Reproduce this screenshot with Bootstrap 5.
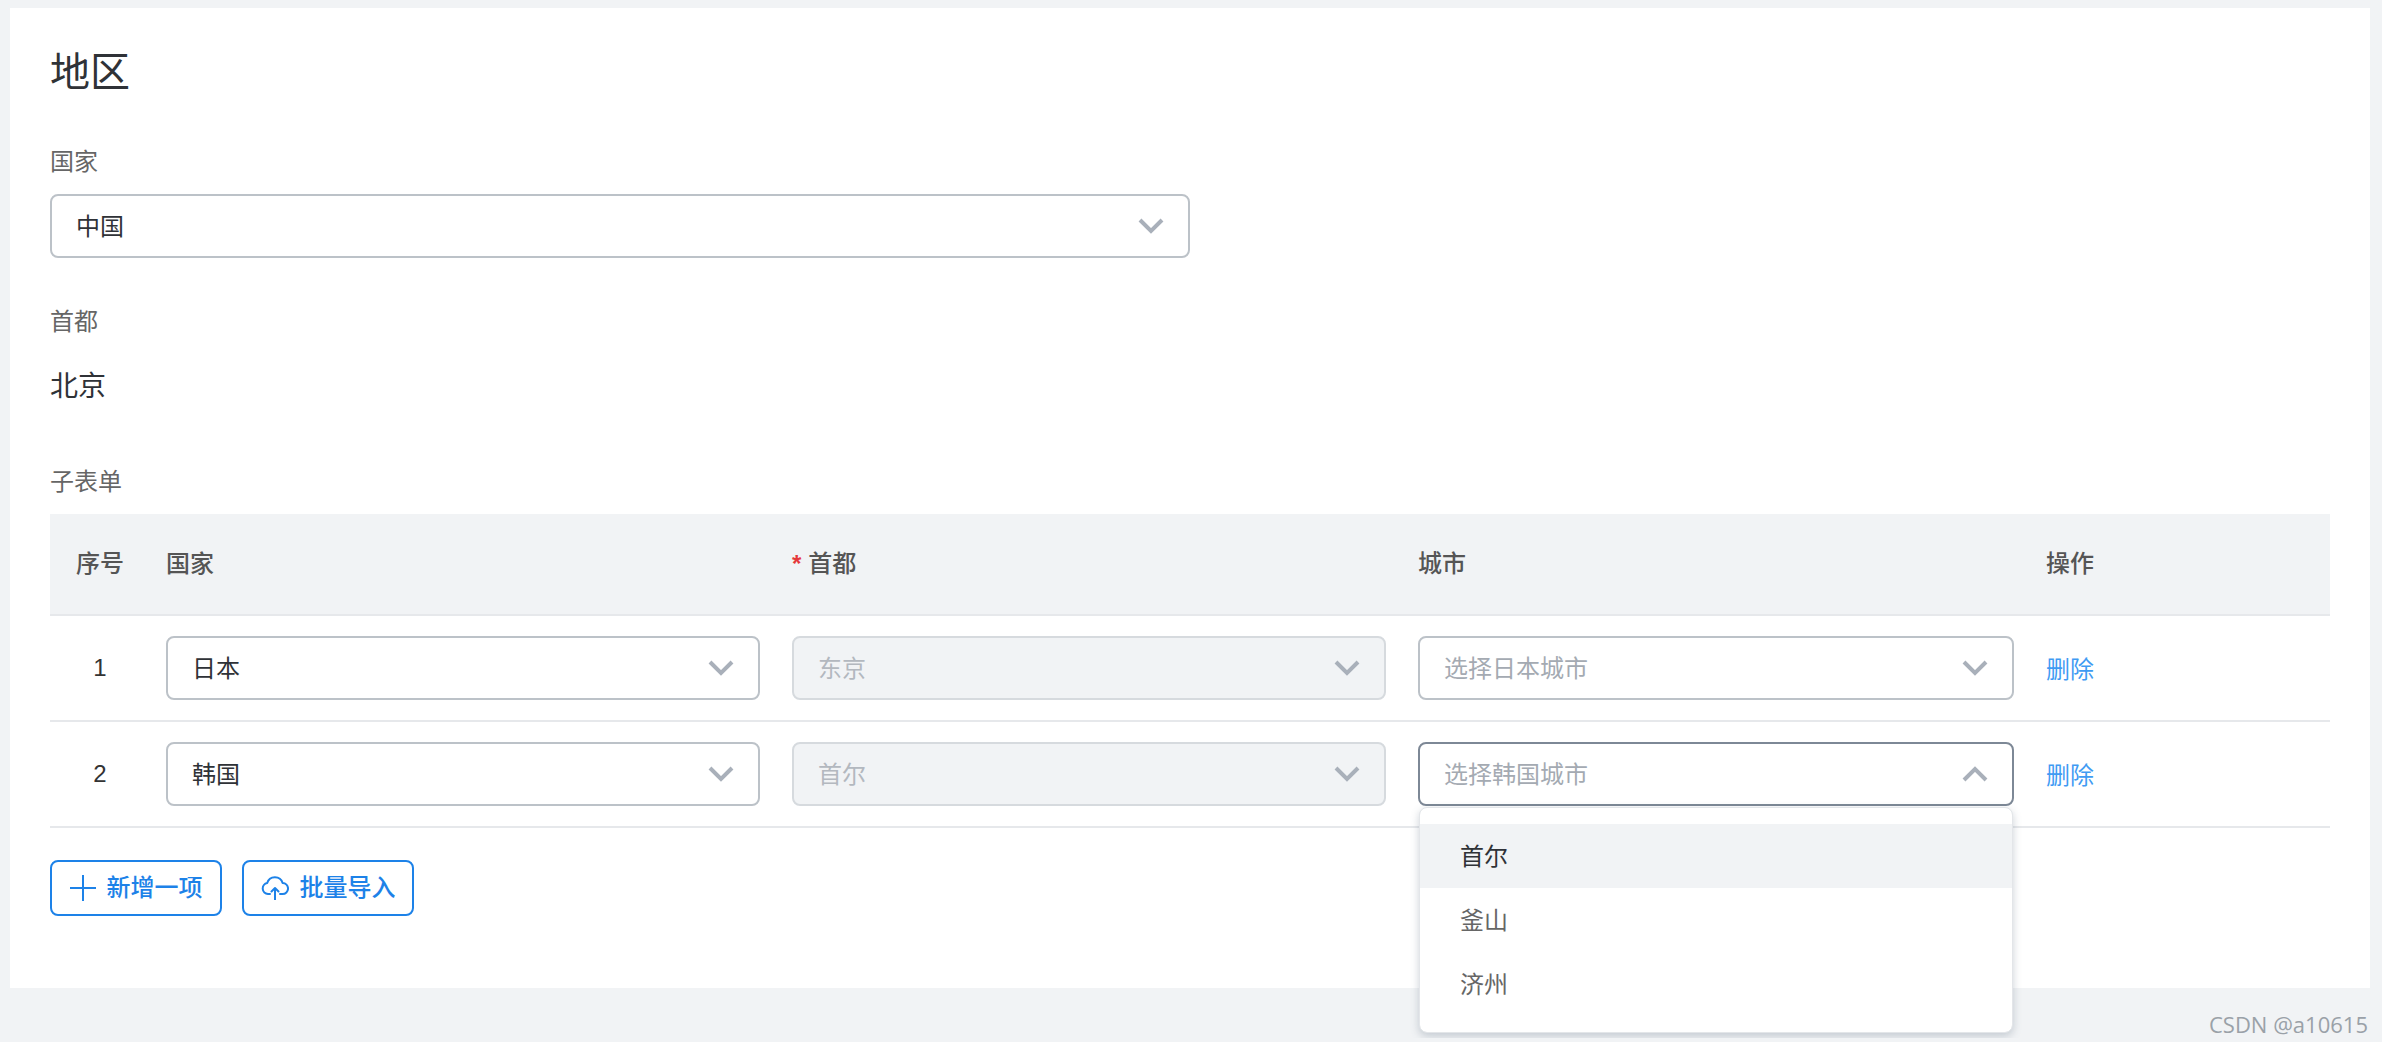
<!DOCTYPE html>
<html lang="zh-CN">
<head>
    <meta charset="UTF-8">
    <meta name="viewport" content="width=device-width, initial-scale=1.0">
    <title>地区</title>
    <link href="https://cdn.jsdelivr.net/npm/bootstrap@5.3.0/dist/css/bootstrap.min.css" rel="stylesheet">
    <style>
        body {
            background-color: #f1f3f5;
            font-family: "Liberation Sans", "Noto Sans CJK SC", sans-serif;
            font-size: 24px;
            color: #333;
        }
        .form-panel {
            background-color: #fff;
            margin: 8px 12px 0 10px;
            padding: 38px 40px 72px 40px;
        }
        .panel-title {
            font-size: 40px;
            line-height: 52px;
            font-weight: 400;
            color: #2f3237;
            margin-bottom: 48px;
        }
        .field-group {
            margin-bottom: 48px;
        }
        .field-label {
            font-size: 24px;
            line-height: 32px;
            color: #666;
            margin-bottom: 16px;
        }
        .field-value {
            font-size: 28px;
            line-height: 64px;
            height: 64px;
            padding-top: 1px;
            color: #2f3237;
        }
        .select-box {
            height: 64px;
            padding: 0 24px 0 24px;
            background-color: #fff;
            border: 2px solid #bcc2c8;
            border-radius: 8px;
            color: #2f3237;
            line-height: 1;
        }
        .select-box span {
            margin-top: 2px;
        }
        .select-box.country-select {
            width: 1140px;
        }
        .select-box.is-disabled {
            background-color: #f1f3f5;
            border-color: #d6dade;
            color: #b3b8bf;
        }
        .select-box.is-open {
            border-color: #7d8896;
        }
        .placeholder-text {
            color: #a4aab2;
        }
        .chevron {
            width: 26px;
            height: 16px;
            flex: none;
            fill: none;
            stroke: #a9b0ba;
            stroke-width: 4;
        }
        .subform-table {
            table-layout: fixed;
            width: 2280px;
            --bs-table-bg: transparent;
            --bs-table-color: #333;
        }
        .subform-table th {
            height: 101px;
            padding: 0 16px;
            background-color: #f1f3f5;
            border-bottom: 2px solid #e6e8eb;
            font-weight: 500;
            color: #555;
            vertical-align: middle;
        }
        .subform-table td {
            height: 106px;
            padding: 0 16px;
            border-bottom: 2px solid #e6e8eb;
        }
        .required-mark {
            color: #e5383b;
            font-size: 24px;
            font-weight: 700;
            margin-right: 7px;
        }
        .delete-link {
            color: #3f9bf3;
            text-decoration: none;
            position: relative;
            top: 2px;
        }
        .button-row {
            gap: 20px;
            margin-top: 32px;
        }
        .action-btn {
            height: 56px;
            width: 172px;
            padding: 0;
            gap: 11px;
            font-size: 24px;
            font-weight: 500;
            color: #1d82e8;
            border: 2px solid #1d82e8;
            border-radius: 8px;
            background-color: #fff;
        }
        .city-menu {
            top: 85px;
            left: 17px;
            width: 594px;
            padding: 16px 0 16px;
            margin: 0;
            border: 1px solid #e3e6e9;
            border-radius: 8px;
            box-shadow: 0 3px 8px rgba(90, 105, 125, .3);
            font-size: 24px;
        }
        .city-menu .dropdown-item {
            height: 64px;
            line-height: 66px;
            padding: 0 40px;
            color: #666;
        }
        .city-menu .dropdown-item.is-hover {
            background-color: #f1f3f5;
            color: #2f3237;
        }
        .page-mark {
            padding: 22px 14px 0 0;
            font-family: "Open Sans", sans-serif;
            font-size: 22px;
            line-height: 28px;
            color: #9aa1a8;
        }
    </style>
</head>
<body>
    <div class="form-panel">
        <h1 class="panel-title">地区</h1>

        <div class="field-group">
            <div class="field-label">国家</div>
            <div class="select-box country-select d-flex align-items-center justify-content-between">
                <span>中国</span>
                <svg class="chevron" viewBox="0 0 26 16"><path d="M2 2l11 11L24 2"/></svg>
            </div>
        </div>

        <div class="field-group">
            <div class="field-label">首都</div>
            <div class="field-value">北京</div>
        </div>

        <div class="field-label">子表单</div>
        <table class="table subform-table align-middle mb-0">
            <colgroup>
                <col width="100">
                <col width="626">
                <col width="626">
                <col width="628">
                <col width="300">
            </colgroup>
            <thead>
                <tr>
                    <th class="text-center">序号</th>
                    <th>国家</th>
                    <th><span class="required-mark">*</span>首都</th>
                    <th>城市</th>
                    <th>操作</th>
                </tr>
            </thead>
            <tbody>
                <tr>
                    <td class="text-center">1</td>
                    <td>
                        <div class="select-box d-flex align-items-center justify-content-between">
                            <span>日本</span>
                            <svg class="chevron" viewBox="0 0 26 16"><path d="M2 2l11 11L24 2"/></svg>
                        </div>
                    </td>
                    <td>
                        <div class="select-box is-disabled d-flex align-items-center justify-content-between">
                            <span>东京</span>
                            <svg class="chevron" viewBox="0 0 26 16"><path d="M2 2l11 11L24 2"/></svg>
                        </div>
                    </td>
                    <td>
                        <div class="select-box d-flex align-items-center justify-content-between">
                            <span class="placeholder-text">选择日本城市</span>
                            <svg class="chevron" viewBox="0 0 26 16"><path d="M2 2l11 11L24 2"/></svg>
                        </div>
                    </td>
                    <td><a class="delete-link" href="#">删除</a></td>
                </tr>
                <tr>
                    <td class="text-center">2</td>
                    <td>
                        <div class="select-box d-flex align-items-center justify-content-between">
                            <span>韩国</span>
                            <svg class="chevron" viewBox="0 0 26 16"><path d="M2 2l11 11L24 2"/></svg>
                        </div>
                    </td>
                    <td>
                        <div class="select-box is-disabled d-flex align-items-center justify-content-between">
                            <span>首尔</span>
                            <svg class="chevron" viewBox="0 0 26 16"><path d="M2 2l11 11L24 2"/></svg>
                        </div>
                    </td>
                    <td class="position-relative">
                        <div class="select-box is-open d-flex align-items-center justify-content-between">
                            <span class="placeholder-text">选择韩国城市</span>
                            <svg class="chevron" viewBox="0 0 26 16"><path d="M2 14L13 3l11 11"/></svg>
                        </div>
                        <!-- open dropdown lies over the rows below -->
                        <ul class="dropdown-menu show city-menu list-unstyled">
                            <li><a class="dropdown-item is-hover" href="#">首尔</a></li>
                            <li><a class="dropdown-item" href="#">釜山</a></li>
                            <li><a class="dropdown-item" href="#">济州</a></li>
                        </ul>
                    </td>
                    <td><a class="delete-link" href="#">删除</a></td>
                </tr>
            </tbody>
        </table>

        <div class="d-flex button-row">
            <button type="button" class="btn action-btn d-flex align-items-center justify-content-center">
                <svg width="26" height="26" viewBox="0 0 26 26" fill="none" stroke="#1d82e8" stroke-width="2"><path d="M13 0v26M0 13h26"/></svg>
                <span>新增一项</span>
            </button>
            <button type="button" class="btn action-btn d-flex align-items-center justify-content-center">
                <svg width="28" height="24" viewBox="0 0 28 24" fill="none" stroke="#1d82e8" stroke-width="2" stroke-linecap="round" stroke-linejoin="round"><path d="M9 18H7a5.500 5.500 0 0 1-.8-10.900A8 8 0 0 1 21.600 7 5.500 5.500 0 0 1 21.500 18H19"/><path d="M14 24V12M10.500 15.500L14 12l3.500 3.500"/></svg>
                <span>批量导入</span>
            </button>
        </div>
    </div>
    <div class="page-mark text-end">CSDN @a10615</div>
</body>
</html>
